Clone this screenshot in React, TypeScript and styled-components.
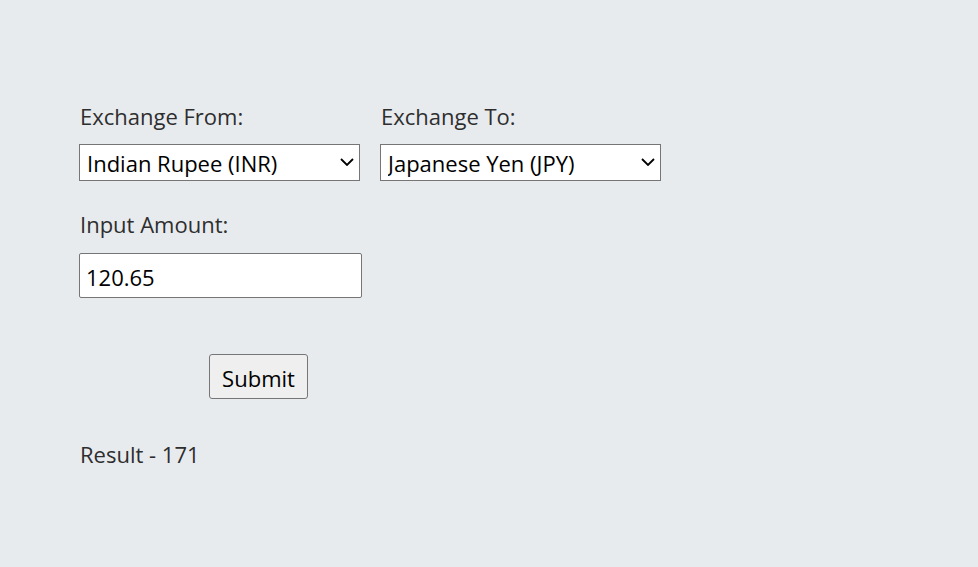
import React, { useState } from "react";
import styled, { createGlobalStyle } from "styled-components";

const GlobalStyle = createGlobalStyle`
    html, body {
        margin: 0;
        padding: 0;
        background: #e8ebee;
    }
    body {
        font-family: "Open Sans", "Noto Sans", sans-serif;
        color: #2b2b2b;
    }
`;

const currencies = [
    { code: "INR", name: "Indian Rupee" },
    { code: "JPY", name: "Japanese Yen" },
    { code: "USD", name: "US Dollar" },
    { code: "EUR", name: "Euro" },
];

function Chevron() {
    return (
        <ChevronStyled width="14" height="8" viewBox="0 0 14 8" aria-hidden>
            <path d="M1 1 L7 7 L13 1" fill="none" stroke="#000" strokeWidth="1.8" />
        </ChevronStyled>
    );
}

export default function App() {
    const [from, setFrom] = useState("INR");
    const [to, setTo] = useState("JPY");
    const [amount, setAmount] = useState("120.65");

    return (
        <PageStyled>
            <GlobalStyle />
            <FormStyled onSubmit={(e) => e.preventDefault()}>
                <RowStyled>
                    <FieldStyled>
                        <LabelStyled>Exchange From:</LabelStyled>
                        <SelectWrapStyled>
                            <SelectStyled value={from} onChange={(e) => setFrom(e.target.value)}>
                                {currencies.map((c) => (
                                    <option key={c.code} value={c.code}>
                                        {c.name} ({c.code})
                                    </option>
                                ))}
                            </SelectStyled>
                            <Chevron />
                        </SelectWrapStyled>
                    </FieldStyled>
                    <FieldStyled>
                        <LabelStyled>Exchange To:</LabelStyled>
                        <SelectWrapStyled>
                            <SelectStyled value={to} onChange={(e) => setTo(e.target.value)}>
                                {currencies.map((c) => (
                                    <option key={c.code} value={c.code}>
                                        {c.name} ({c.code})
                                    </option>
                                ))}
                            </SelectStyled>
                            <Chevron />
                        </SelectWrapStyled>
                    </FieldStyled>
                </RowStyled>
                <FieldStyled>
                    <LabelStyled>Input Amount:</LabelStyled>
                    <InputStyled value={amount} onChange={(e) => setAmount(e.target.value)} />
                </FieldStyled>
                <SubmitStyled type="submit">Submit</SubmitStyled>
                <ResultStyled>Result - 171</ResultStyled>
            </FormStyled>
        </PageStyled>
    );
}

const PageStyled = styled.div`
    min-height: 567px;
    padding: 101px 0 0 79px;
    box-sizing: border-box;
`;

const FormStyled = styled.form`
    display: flex;
    flex-direction: column;
    align-items: flex-start;
`;

const RowStyled = styled.div`
    display: flex;
    gap: 20px;
    margin-bottom: 28px;
`;

const FieldStyled = styled.div`
    display: flex;
    flex-direction: column;
    align-items: flex-start;
`;

const LabelStyled = styled.label`
    font-size: 22px;
    line-height: 30px;
    color: #2e2e2e;
    margin-bottom: 13px;
    padding-left: 1px;
`;

const SelectWrapStyled = styled.div`
    position: relative;
    display: flex;
`;

const SelectStyled = styled.select`
    appearance: none;
    width: 281px;
    height: 37px;
    font-family: "Open Sans", "Noto Sans", sans-serif;
    font-size: 22px;
    color: #000;
    background: #fff;
    border: 1px solid #767676;
    border-radius: 0;
    padding: 0 30px 0 7px;
`;

const ChevronStyled = styled.svg`
    position: absolute;
    right: 6px;
    top: 14px;
    pointer-events: none;
`;

const InputStyled = styled.input`
    margin-top: 1px;
    width: 283px;
    height: 45px;
    box-sizing: border-box;
    font-family: "Open Sans", "Noto Sans", sans-serif;
    font-size: 22px;
    color: #000;
    background: #fff;
    border: 1px solid #767676;
    border-radius: 2px;
    padding: 2px 6px 0;
`;

const SubmitStyled = styled.button`
    margin: 56px 0 0 130px;
    width: 99px;
    height: 45px;
    font-family: "Open Sans", "Noto Sans", sans-serif;
    font-size: 22px;
    color: #000;
    background: #efefef;
    border: 1px solid #767676;
    border-radius: 3px;
    padding: 2px 0 0;
`;

const ResultStyled = styled.p`
    margin: 40px 0 0 1px;
    font-size: 22px;
    line-height: 30px;
    color: #2e2e2e;
`;
